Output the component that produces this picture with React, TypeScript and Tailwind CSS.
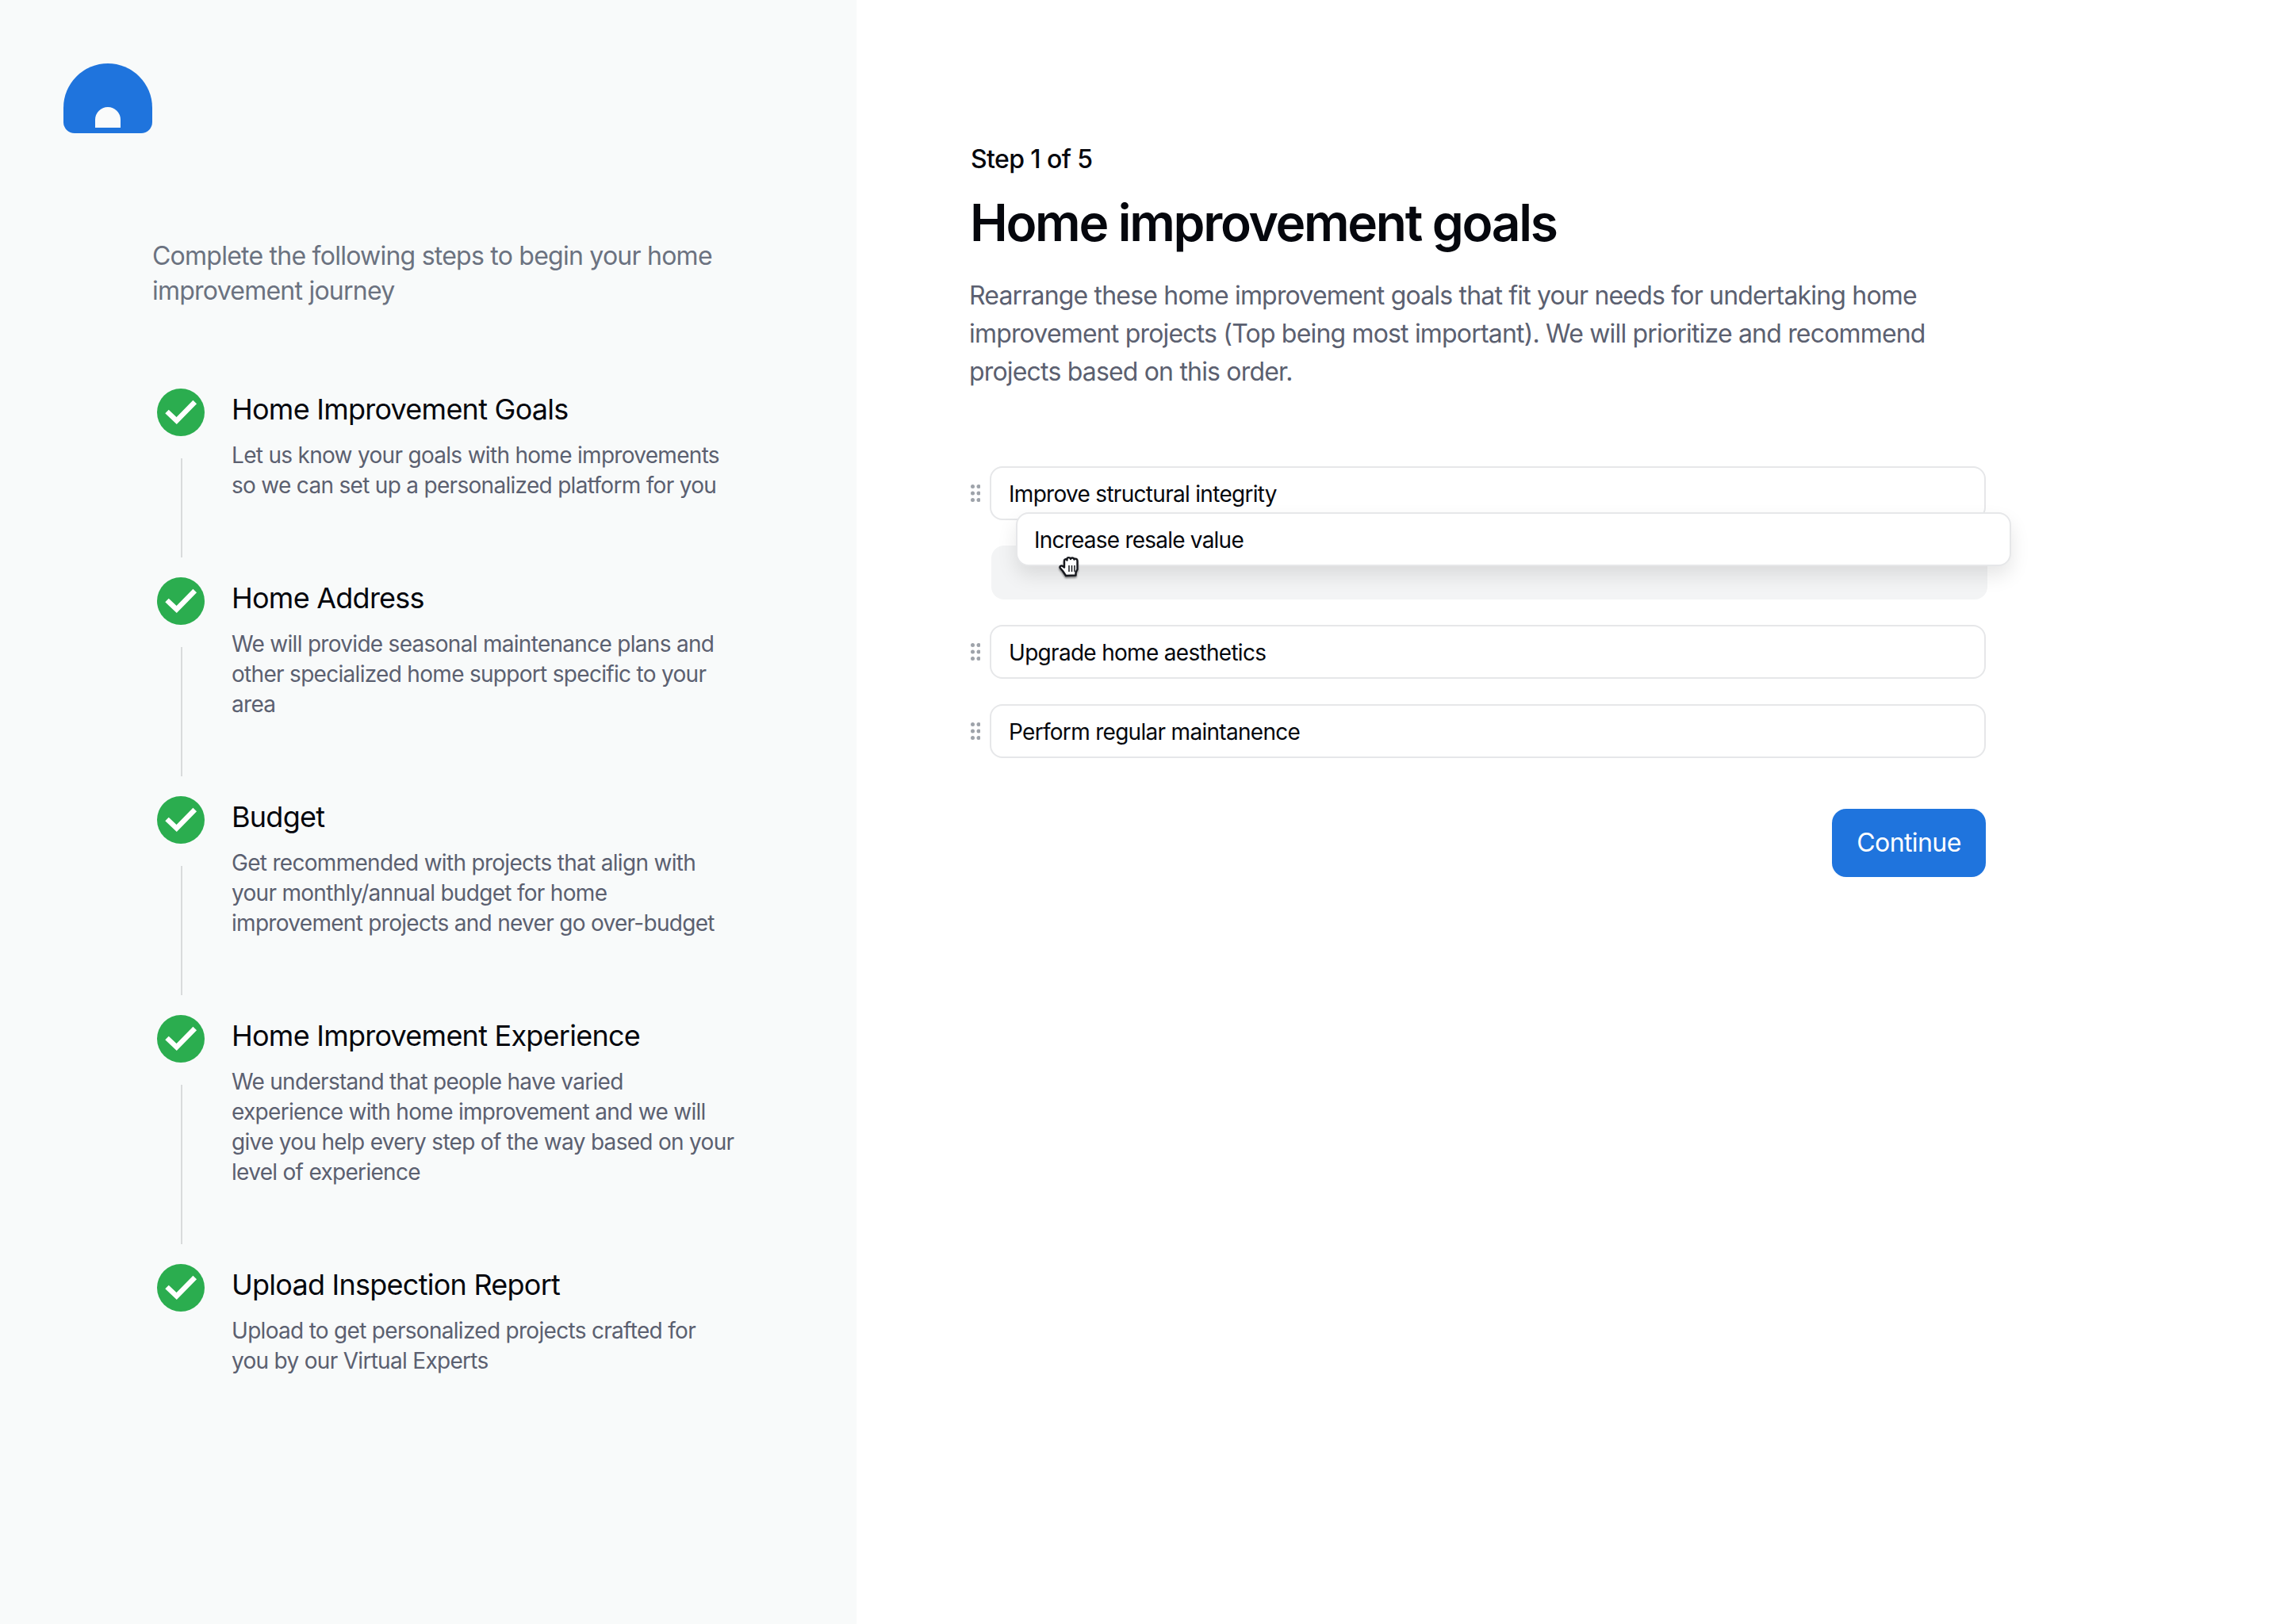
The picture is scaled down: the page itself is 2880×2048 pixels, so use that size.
const steps = [
  {
    title: "Home Improvement Goals",
    lines: ["Let us know your goals with home improvements", "so we can set up a personalized platform for you"],
  },
  {
    title: "Home Address",
    lines: ["We will provide seasonal maintenance plans and", "other specialized home support specific to your", "area"],
  },
  {
    title: "Budget",
    lines: ["Get recommended with projects that align with", "your monthly/annual budget for home", "improvement projects and never go over-budget"],
  },
  {
    title: "Home Improvement Experience",
    lines: ["We understand that people have varied", "experience with home improvement and we will", "give you help every step of the way based on your", "level of experience"],
  },
  {
    title: "Upload Inspection Report",
    lines: ["Upload to get personalized projects crafted for", "you by our Virtual Experts"],
  },
]

function Logo() {
  return (
    <svg width="112" height="88" viewBox="0 0 112 88">
      <path d="M0 56a56 56 0 0 1 112 0v18a14 14 0 0 1-14 14H14A14 14 0 0 1 0 74z" fill="#1f74dd" />
      <path d="M40 81V71a16 16 0 0 1 32 0v10z" fill="#fafbfb" />
    </svg>
  )
}

function Check() {
  return (
    <svg width="60" height="60" viewBox="0 0 60 60" className="shrink-0">
      <circle cx="30" cy="30" r="30" fill="#2bad4f" />
      <path d="M12.500 29 24.700 40.500 47.700 17" fill="none" stroke="#fff" strokeWidth="6.500" />
    </svg>
  )
}

function Dots() {
  return (
    <svg width="12" height="22" viewBox="0 0 12 22" className="shrink-0">
      {[2.5, 11, 19.5].map(y => (
        <g key={y} fill="#9ea3aa">
          <circle cx="2.5" cy={y} r="2.5" />
          <circle cx="10" cy={y} r="2.5" />
        </g>
      ))}
    </svg>
  )
}

function Grab() {
  return (
    <svg width="30" height="28" viewBox="0 0 30 28" className="absolute left-[85px] top-[13px] drop-shadow-[0_2px_1px_rgba(0,0,0,0.45)]">
      <path
        d="M9 25 5 19 2 15.500c-1.500-2 1-4 3-2.500l2 1.500V6c0-2 3-2.500 3.500-.5V4c0-2.500 4-2.500 4.500 0 .5-2 4-2 4.500.5.5-1.500 4-1 4 1.500v11l-2 4v3.500z"
        fill="#fff"
        stroke="#16181d"
        strokeWidth="2.400"
        strokeLinejoin="round"
      />
      <path d="M13 12v8M16.500 12v8M20 12v8" stroke="#16181d" strokeWidth="1.500" />
    </svg>
  )
}

function Item({ label }: { label: string }) {
  return (
    <div className="flex items-center gap-3">
      <Dots />
      <div className="flex h-[68px] flex-1 items-center rounded-[16px] border-2 border-[#e6e7e9] bg-white pl-[22px] pt-[1px] text-[28px] tracking-[-0.7px] text-[#05070d]">
        {label}
      </div>
    </div>
  )
}

export default function App() {
  return (
    <div className="flex min-h-[2048px] w-[2880px] bg-white font-['Inter',sans-serif]">
      <aside className="h-[2048px] w-[1080px] shrink-0 bg-[#f8fafa] pl-[80px] pt-[80px]">
        <Logo />
        <div className="mt-[133px] pl-[112px]">
          <p className="text-[32px] leading-[44px] tracking-[-0.76px] text-[#6b7280]">
            Complete the following steps to begin your home
            <br />
            improvement journey
          </p>
          <div className="ml-[6px] mt-[101px] flex flex-col">
            {steps.map((step, i) => (
              <div key={step.title} className="flex gap-[34px]">
                <div className="flex w-[60px] flex-col items-center">
                  <Check />
                  {i < steps.length - 1 && <div className="mb-[25px] ml-[1px] mt-[28px] w-[2px] flex-1 bg-[#d9dbdc]" />}
                </div>
                <div className={i < steps.length - 1 ? "pb-[97px]" : ""}>
                  <h3 className="text-[36px] font-normal leading-[52px] tracking-[-0.75px] text-[#05070d]">{step.title}</h3>
                  <p className="mt-[13px] text-[28px] leading-[38px] tracking-[-0.7px] text-[#5b6070]">
                    {step.lines.map(line => (
                      <span key={line} className="block whitespace-nowrap">
                        {line}
                      </span>
                    ))}
                  </p>
                </div>
              </div>
            ))}
          </div>
        </div>
      </aside>
      <main className="w-[1424px] pl-[144px] pt-[180px]">
        <div className="text-[32px] font-medium leading-[42px] tracking-[-0.6px] text-[#05070d]">Step 1 of 5</div>
        <h1 className="-ml-[1px] mt-[19px] text-[64px] font-semibold leading-[80px] tracking-[-2.3px] text-[#05070d]">
          Home improvement goals
        </h1>
        <p className="-ml-[2px] mt-[28px] w-[1256px] text-[32px] leading-[48px] tracking-[-0.82px] text-[#5b6070]">
          Rearrange these home improvement goals that fit your needs for undertaking home improvement projects (Top being most important). We will prioritize and recommend projects based on this order.
        </p>
        <div className="mt-[95px] flex flex-col gap-[32px]">
          <Item label="Improve structural integrity" />
          <div className="relative -mr-[2px] ml-[26px] h-[68px] rounded-[16px] bg-[#f3f4f5]">
            <div className="absolute -top-[42px] left-[31px] flex h-[68px] w-[1255px] items-center rounded-[16px] border-2 border-[#e6e7e9] bg-white pl-[21px] pt-[1px] text-[28px] tracking-[-0.78px] text-[#05070d] shadow-[0_12px_24px_rgba(0,0,0,0.1)]">
              Increase resale value
            </div>
            <Grab />
          </div>
          <Item label="Upgrade home aesthetics" />
          <Item label="Perform regular maintanence" />
        </div>
        <div className="mt-[64px] flex justify-end">
          <button className="h-[86px] w-[194px] rounded-[18px] bg-[#1f74dd] text-[32px] tracking-[-0.6px] text-white">Continue</button>
        </div>
      </main>
    </div>
  )
}
